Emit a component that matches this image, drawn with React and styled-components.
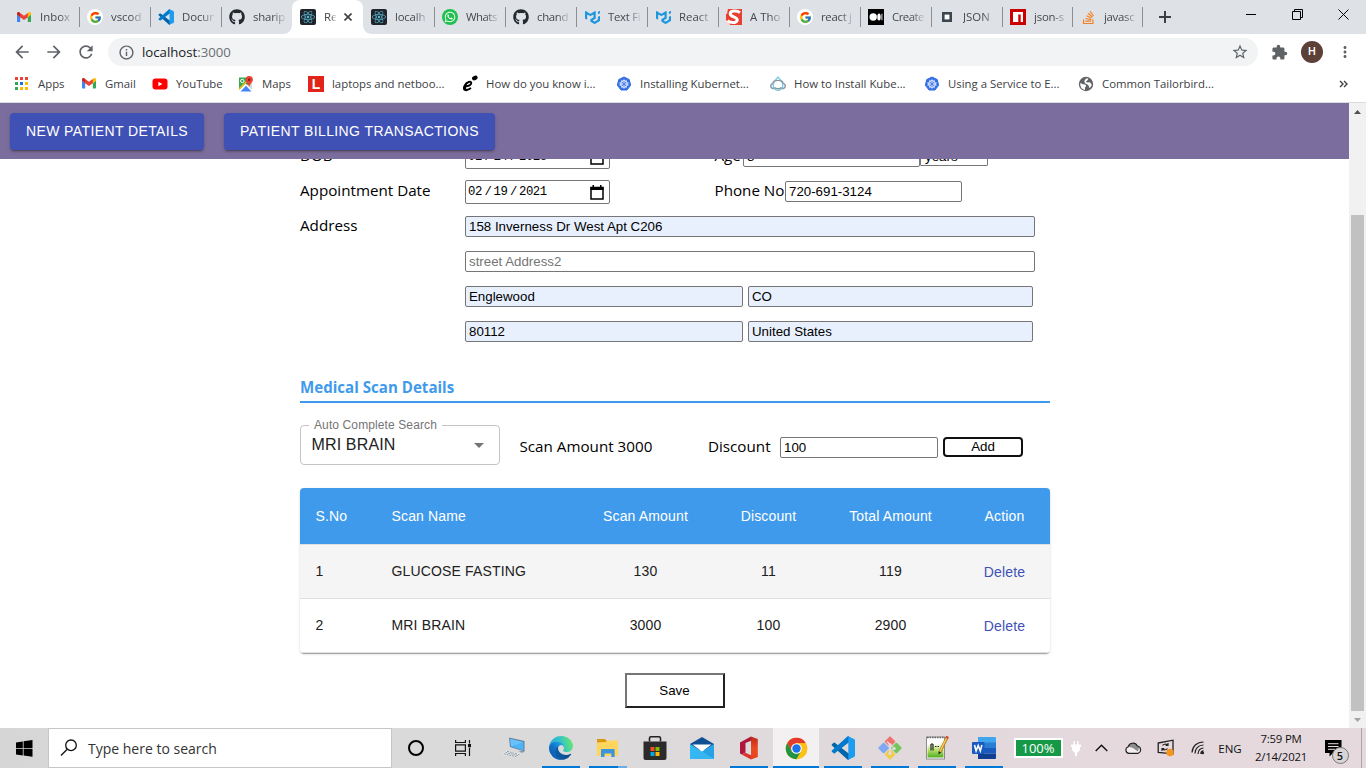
import React from "react";
import styled, { createGlobalStyle, css } from "styled-components";
import { FcGoogle } from "react-icons/fc";
import { FaGithub, FaReact, FaWhatsapp, FaStackOverflow } from "react-icons/fa";
import { SiMui } from "react-icons/si";
import {
  MdArrowBack,
  MdArrowForward,
  MdRefresh,
  MdInfoOutline,
  MdStarBorder,
  MdExtension,
  MdMoreVert,
} from "react-icons/md";

const ui = `"Open Sans", "Noto Sans", sans-serif`;
const arial = `"Liberation Sans", Arial, sans-serif`;

const Global = createGlobalStyle`
  *, *::before, *::after { box-sizing: border-box; }
  body { margin: 0; background: #fff; overflow: hidden; font-family: ${ui}; }
  svg { display: block; flex: none; }
  input, button, select { font-family: ${arial}; margin: 0; }
`;

const Screen = styled.div`
  width: 1366px;
  height: 768px;
  display: flex;
  flex-direction: column;
  overflow: hidden;
`;

/* ---------- icons ---------- */

const GmailIcon = ({ w = 16 }) => (
  <svg width={w} height={w * 0.76} viewBox="0 0 256 193">
    <path fill="#4285F4" d="M58.182 192.05V93.14L27.507 65.077 0 49.504v125.091c0 9.658 7.825 17.455 17.455 17.455h40.727z" />
    <path fill="#34A853" d="M197.818 192.05h40.727c9.659 0 17.455-7.826 17.455-17.455V49.505l-31.156 17.837-27.026 25.798v98.91z" />
    <path fill="#EA4335" d="m58.182 93.14-4.174-38.647 4.174-36.989L128 69.868l69.818-52.364 4.669 34.992-4.669 40.644L128 145.504z" />
    <path fill="#FBBC04" d="M197.818 17.504V93.14L256 49.504V26.231c0-21.585-24.64-33.89-41.89-20.945l-16.292 12.218z" />
    <path fill="#C5221F" d="m0 49.504 26.759 20.07L58.182 93.14V17.504L41.89 5.286C24.61-7.66 0 4.646 0 26.23v23.273z" />
  </svg>
);

const CodeIcon = ({ s = 16 }) => (
  <svg width={s} height={s} viewBox="0 0 24 24">
    <path fill="#0065a9" d="M1 8.2 2.6 6.8a1 1 0 0 1 1.2 0L18 17.8v5.6L17 24 .9 9.4a.8.8 0 0 1 .1-1.2z" />
    <path fill="#007acc" d="M1 15.8l1.6 1.4a1 1 0 0 0 1.2 0L18 6.2V.6L17 0 .9 14.6a.8.8 0 0 0 .1 1.2z" />
    <path fill="#1f9cf0" d="M17.3.3 23 3a1.7 1.7 0 0 1 1 1.5v15a1.7 1.7 0 0 1-1 1.5l-5.7 2.7z" />
  </svg>
);

const PuffS = () => (
  <svg width="16" height="16" viewBox="0 0 16 16">
    <rect width="16" height="16" fill="#e8402f" />
    <path d="M0 0h2L1 5 0 5zM0 11l4 4v1H0z" fill="#f8d5d0" />
    <path d="M14 3.600C10.500.8 3.800 1.600 4.300 5.200c.4 2.800 7 2.600 6.900 5.600-.2 3.200-6 3.700-9.700.8" fill="none" stroke="#fff" strokeWidth="3" />
  </svg>
);

const MediumIcon = () => (
  <svg width="16" height="16" viewBox="0 0 16 16">
    <rect width="16" height="16" fill="#000" />
    <circle cx="5.2" cy="8" r="3.7" fill="#fff" />
    <ellipse cx="11" cy="8" rx="1.7" ry="3.5" fill="#fff" />
    <rect x="13.4" y="4.8" width="1" height="6.4" fill="#ddd" />
  </svg>
);

const SquareIcon = () => (
  <svg width="16" height="16" viewBox="0 0 16 16">
    <rect x="4.3" y="4.3" width="7.4" height="7.4" fill="#fff" stroke="#3c4650" strokeWidth="2.6" />
  </svg>
);

const NpmIcon = () => (
  <svg width="16" height="16" viewBox="0 0 16 16">
    <rect width="16" height="16" fill="#cb0000" />
    <path d="M3 3h10v10h-2.300V5.500H8.300V13H3z" fill="#fff" />
  </svg>
);

const YouTubeIcon = () => (
  <svg width="16" height="16" viewBox="0 0 16 16">
    <rect x=".5" y="2.500" width="15" height="11" rx="3" fill="#f00" />
    <path d="M6.400 5.700v4.600l4-2.300z" fill="#fff" />
  </svg>
);

const MapsIcon = () => (
  <svg width="16" height="16" viewBox="0 0 16 16">
    <path d="M1 1.500h9V9l-9 5z" fill="#34a853" />
    <path d="M1 14 7.500 7.500 14 14v1.500H1z" fill="#fff" />
    <path d="M2.500 15.500 8 9.800l5.500 5.700z" fill="#4285f4" />
    <path d="m9 9 5 5V6z" fill="#d5d8dc" />
    <path d="M1 13 10 4" stroke="#fbbc04" strokeWidth="1.300" />
    <circle cx="4.300" cy="5" r="1.700" fill="none" stroke="#fff" />
    <path d="M11.200 0a3.700 3.700 0 0 1 3.700 3.700c0 2.500-2.800 3.800-3.700 7.300-.9-3.500-3.700-4.800-3.700-7.300A3.700 3.700 0 0 1 11.200 0z" fill="#ea4335" />
    <circle cx="11.200" cy="3.800" r="1.300" fill="#8c1a11" />
  </svg>
);

const GlobeIcon = () => (
  <svg width="16" height="16" viewBox="0 0 16 16">
    <circle cx="8" cy="8" r="7.200" fill="#5f6368" />
    <path d="M2.300 7 5 8.200l2.200.3 1 1.500-1.200 1.500v2.400C4.500 13.600 2.300 11.500 2.300 8.500zM8 2.500h2.500L9.300 4.500 8 5.300l.8 1.200 3-.2 1.900 2c-.2 1.700-1 2.900-2.200 3.900l-.8-2.400L9.500 8.500 7 7.300 6.300 5z" fill="#fff" />
  </svg>
);

const AppsIcon = () => {
  const c = ["#ea4335", "#ea4335", "#ea4335", "#34a853", "#1a73e8", "#fbbc04", "#34a853", "#fbbc04", "#fbbc04"];
  return (
    <svg width="16" height="16" viewBox="0 0 16 16">
      {c.map((fill, i) => (
        <rect key={i} x={1 + (i % 3) * 5} y={1 + Math.floor(i / 3) * 5} width="3" height="3" fill={fill} />
      ))}
    </svg>
  );
};

const LetterL = styled.span`
  width: 16px;
  height: 16px;
  background: #e2231a;
  color: #fff;
  font: 700 14px/16px ${arial};
  text-align: center;
  flex: none;
`;

const EIcon = () => (
  <svg width="16" height="17" viewBox="0 0 16 17">
    <ellipse cx="12.800" cy="3" rx="2.900" ry="2.200" transform="rotate(-20 12.800 3)" />
    <path d="M3 11.200c3.600.2 6.300-1.500 6.300-3.300C9.300 5.800 4.600 6.600 2.700 10.700c-1.600 3.800 1.300 5.800 6.300 2.300" fill="none" stroke="#000" strokeWidth="1.900" />
    <path d="M5.500 7C2 9 .3 13 1.500 15c1 1.500 3.500 1.300 5 .6-2.700-.1-3.200-3.600-1-8.600z" />
  </svg>
);

const KubeIcon = () => (
  <svg width="16" height="16" viewBox="0 0 16 16">
    <path d="M8 1 13.300 3.600 14.600 9.300 11 14H5L1.400 9.300 2.700 3.600z" fill="#326ce5" stroke="#326ce5" strokeLinejoin="round" />
    <circle cx="8" cy="8" r="3.400" fill="none" stroke="#fff" strokeWidth="1" />
    <path d="M8 2.800v10.400M2.900 6.800l10.200 2.400M13.100 6.800 2.900 9.200M5.300 12.200l5.400-8.400M10.700 12.200 5.300 3.800" stroke="#dfe8fb" strokeWidth=".7" />
    <circle cx="8" cy="8" r="1.100" fill="#326ce5" />
  </svg>
);

const CloudHostIcon = () => (
  <svg width="16" height="16" viewBox="0 0 16 16" fill="none">
    <path d="M4 7.500C1.500 7 .7 9 .8 10.300c.2 1.700 1.700 2.200 3.200 2.200M12 7.500c2.500-.5 3.300 1.500 3.200 2.800-.2 1.700-1.700 2.200-3.200 2.200" stroke="#8b979d" strokeWidth="1.400" />
    <path d="M8 1c1.500 2 4.800 4.700 4.800 8.500a4.800 4.800 0 0 1-9.600 0C3.200 5.700 6.500 3 8 1z" stroke="#6cc5e6" strokeWidth="1.200" />
    <path d="M3 7c.5-3.500 9.500-3.500 10 0M4.500 11.500c1.500 1.600 5.500 1.600 7 0" stroke="#8b979d" strokeWidth="1.400" />
  </svg>
);

const WinLogo = () => (
  <svg width="17" height="17" viewBox="0 0 17 17">
    <path d="M0 2.400 6.800 1.400V8H0zM7.600 1.300 16.500 0v8H7.600zM0 8.800h6.800v6.700L0 14.500zM7.600 8.800h8.900v8L7.600 15.600z" />
  </svg>
);

const SearchGlyph = () => (
  <svg width="18" height="18" viewBox="0 0 18 18" fill="none" stroke="#111" strokeWidth="1.300">
    <circle cx="11" cy="6.300" r="5.300" />
    <path d="M7.200 10.200 1 16.500" />
  </svg>
);

const TaskView = () => (
  <svg width="16" height="16" viewBox="0 0 16 16" fill="none" stroke="#111" strokeWidth="1.200">
    <path d="M.6 0v2.500h9.800V0M.6 16v-2.500h9.800V16M.6 4.800h9.800v6.400H.6zM14.500 0v3.500M14.500 7.800V16" />
    <path d="M13 4h3v3.200h-3z" fill="#111" stroke="none" />
  </svg>
);

const LaptopIcon = () => (
  <svg width="24" height="22" viewBox="0 0 24 22">
    <path d="M7 .5 22.500 4v10.500L8 10z" fill="#5b7f9c" />
    <path d="M8 1.700 21.500 4.900v8.500L9 9.500z" fill="#4fb4f5" />
    <path d="M9 9.500 8 1.700 21.500 4.900z" fill="#7cc9fa" opacity=".6" />
    <path d="M21.500 13.500 22.500 15l-3 .8-3-1.300z" fill="#8c98a3" />
    <path d="M5.500 13.500 19 17l-5 3.500L0 17z" fill="#eceff2" />
    <path d="M5 14.200 17.500 17.700M3.500 15.400l12.500 3.300M1.800 16.700l12.700 3.100" stroke="#8f989f" strokeWidth="1" strokeDasharray="2 .8" />
  </svg>
);

const EdgeIcon = () => (
  <svg width="24" height="24" viewBox="0 0 256 256">
    <defs>
      <linearGradient id="eg1" x1="0.250" y1="0.700" x2="0.950" y2="0.700"><stop offset="0" stopColor="#0c59a4" /><stop offset="1" stopColor="#114a8b" /></linearGradient>
      <linearGradient id="eg2" x1="0.900" y1="0.300" x2="0.300" y2="0.950"><stop offset="0" stopColor="#1b9de2" /><stop offset=".5" stopColor="#1173c6" /><stop offset="1" stopColor="#0b5bb0" /></linearGradient>
      <linearGradient id="eg3" x1="0" y1="0.600" x2="1" y2="0.400"><stop offset="0" stopColor="#2aa5dd" /><stop offset=".5" stopColor="#35c1c8" /><stop offset="1" stopColor="#66eb6e" /></linearGradient>
    </defs>
    <path fill="url(#eg1)" d="M231 190.500c-3.400 1.800-6.900 3.400-10.500 4.700a101 101 0 0 1-35.900 6.500c-47.300 0-88.500-32.500-88.500-74.300a31.500 31.500 0 0 1 16.400-27.300c-42.800 1.800-53.800 46.400-53.800 72.500 0 73.900 68.100 81.400 82.800 81.400 7.900 0 19.800-2.300 27-4.600l1.300-.4a128.300 128.300 0 0 0 66.600-52.800 4 4 0 0 0-5.400-5.700z" />
    <path fill="url(#eg2)" d="M105.700 241.400a79.200 79.200 0 0 1-22.700-21.300 80.700 80.700 0 0 1 29.500-120c3.200-1.500 8.500-4.100 15.600-4a32.400 32.400 0 0 1 25.700 13 31.900 31.900 0 0 1 6.300 18.700c0-.2 24.500-79.600-80-79.600C36.100 48.200 0 89.900 0 126.500A130 130 0 0 0 12.100 182a128 128 0 0 0 156.400 67 75.500 75.500 0 0 1-62.800-7.600z" />
    <path fill="url(#eg3)" d="M152.300 148.900c-.9 1-3.400 2.500-3.400 5.600 0 2.600 1.700 5.200 4.800 7.300 14.400 10.100 41.700 8.700 41.700 8.700a59.600 59.600 0 0 0 30.300-8.300 61.400 61.400 0 0 0 30.400-52.900c.3-22.400-8-37.300-11.300-43.900C223.500 23.900 177.700 0 128 0A128 128 0 0 0 0 126.200c.5-36.500 36.800-66 80-66 3.500 0 23.500.3 42 10.100 16.300 8.600 24.900 18.900 30.800 29.200 6.200 10.700 7.300 24.100 7.300 29.500s-2.700 13.300-7.800 19.900z" />
  </svg>
);

const FolderIcon = () => (
  <svg width="22" height="18" viewBox="0 0 22 18">
    <path d="M0 0h8l2 2.500V6H0z" fill="#d99a10" />
    <path d="M0 3.500 9 3l1.500-1.500H21V17H0z" fill="#ffd55e" />
    <path d="M4 18v-7.200A.8.800 0 0 1 4.800 10h12a.8.800 0 0 1 .8.800V18h-3.300v-3.500H7.500V18z" fill="#3b94dc" />
  </svg>
);

const StoreIcon = () => (
  <svg width="24" height="24" viewBox="0 0 24 24">
    <path d="M6.500 5.500V2.300a1.500 1.500 0 0 1 1.500-1.500h8a1.500 1.500 0 0 1 1.500 1.500v3.200" fill="none" stroke="#222" strokeWidth="1.600" />
    <path d="M.5 5.500h23V22a2 2 0 0 1-2 2h-19a2 2 0 0 1-2-2z" fill="#2b2b2b" />
    <path d="M7.500 11h4v4h-4z" fill="#f25022" />
    <path d="M12.500 11h4v4h-4z" fill="#7fba00" />
    <path d="M7.500 16h4v4h-4z" fill="#00a4ef" />
    <path d="M12.500 16h4v4h-4z" fill="#ffb900" />
  </svg>
);

const MailIcon = () => (
  <svg width="24" height="22" viewBox="0 0 24 22">
    <path d="M0 7 12 0l12 7v6H0z" fill="#0f4f94" />
    <path d="M0 7 12 14.500 24 7v15H0z" fill="#35b8f1" />
    <path d="M12 14.500 24 7v15z" fill="#1c8fdc" opacity=".55" />
    <path d="M2.500 7.500h19L12 14.500z" fill="#fff" />
    <path d="M12 14.500 24 22H0z" fill="#38b4f0" opacity=".7" />
  </svg>
);

const OfficeIcon = () => (
  <svg width="20" height="24" viewBox="0 0 20 24">
    <defs><linearGradient id="of" x1="0" y1="0" x2="0" y2="1"><stop offset="0" stopColor="#c0281a" /><stop offset=".5" stopColor="#ea4a20" /><stop offset="1" stopColor="#e8401c" /></linearGradient></defs>
    <path d="M1 6.500 12 .5v4.300L6.500 7v9.500L2.800 18.500 1 17.500z" fill="#b0173c" />
    <path d="M12 .5 18.800 3v18L12 23.500z" fill="url(#of)" />
    <path d="M2.800 18.500 6.500 16.800 12 19.300v4.200z" fill="#d9342f" />
  </svg>
);

const ChromeIcon = () => (
  <svg width="23" height="23" viewBox="0 0 48 48">
    <circle cx="24" cy="24" r="22.500" fill="#fbc116" />
    <path d="M4.500 12.800a22.500 22.500 0 0 1 39 0H24L14.300 29.600z" fill="#e33b2e" />
    <path d="M4.500 12.800 14.300 29.600 24 35.200l9.700-5.600L24 46.500A22.500 22.500 0 0 1 4.500 12.800z" fill="#229342" />
    <path d="M24 46.500 33.700 29.600 33.700 18.400 24 12.800h19.500A22.500 22.500 0 0 1 24 46.500z" fill="#fbc116" />
    <circle cx="24" cy="24" r="11.200" fill="#fff" />
    <circle cx="24" cy="24" r="8.800" fill="#1a73e8" />
  </svg>
);

const GitIcon = () => (
  <svg width="24" height="24" viewBox="0 0 24 24">
    <g transform="rotate(45 12 12)">
      <rect x="3.500" y="3.500" width="8" height="8" rx="1" fill="#f1716f" />
      <rect x="12.500" y="3.500" width="8" height="8" rx="1" fill="#74c55b" />
      <rect x="3.500" y="12.500" width="8" height="8" rx="1" fill="#7fa9f2" />
      <rect x="12.500" y="12.500" width="8" height="8" rx="1" fill="#f2cb49" />
    </g>
    <path d="M9 5.500 14.500 11M12 9v9" stroke="#e3dbdd" strokeWidth="1.500" />
    <circle cx="12" cy="9" r="1.700" fill="#e3dbdd" />
    <circle cx="16" cy="12.500" r="1.700" fill="#e3dbdd" />
    <circle cx="12" cy="17.500" r="1.700" fill="#e3dbdd" />
  </svg>
);

const NotepadIcon = () => (
  <svg width="24" height="24" viewBox="0 0 24 24">
    <defs><linearGradient id="np" x1="0" y1="0" x2="0" y2="1"><stop offset=".25" stopColor="#fff" /><stop offset=".6" stopColor="#b5e06a" /><stop offset="1" stopColor="#4fae20" /></linearGradient></defs>
    <rect x="1.500" y="1" width="18" height="22" fill="#fff" stroke="#8c8c8c" />
    <rect x="2.500" y="3" width="16" height="18.500" fill="url(#np)" />
    <path d="M2 1.500h17" stroke="#666" strokeWidth="1.500" strokeDasharray="1.500 1" />
    <path d="M6 8v6.500M8 8v6.500M6 8h2M10 10.500h1.500M12.500 10.500H14" stroke="#222" strokeWidth="1.200" fill="none" />
    <path d="M22 1.500 15 16" stroke="#b9812b" strokeWidth="3" />
    <path d="M21.700 1.800 14.900 15.700" stroke="#f5cf57" strokeWidth="1.400" />
    <path d="M22.600.3l-1 2.100" stroke="#d04a3a" strokeWidth="3" />
    <path d="m13.600 15.200 2.700 1.300-2.900 2z" fill="#222" />
  </svg>
);

const WordIcon = () => (
  <svg width="24" height="22" viewBox="0 0 24 22">
    <path d="M6 0h17a1 1 0 0 1 1 1v5H6z" fill="#41a5ee" />
    <path d="M6 5.500h18V11H6z" fill="#2b7cd3" />
    <path d="M6 11h18v5.500H6z" fill="#185abd" />
    <path d="M6 16.500h18V21a1 1 0 0 1-1 1H6z" fill="#103f91" />
    <rect x="0" y="5" width="12.500" height="12" rx="1" fill="#185abd" />
    <path d="m2.500 8 1.600 6 2.100-5.500 2.100 5.500L9.900 8" fill="none" stroke="#fff" strokeWidth="1.600" />
  </svg>
);

const PlugIcon = () => (
  <svg width="10" height="15" viewBox="0 0 10 15" fill="#fff">
    <path d="M2.500 0h1.400v3.500h2.200V0h1.400v3.500H10V6H9v3l-2.500 2.500H6V15H4v-3.500h-.5L1 9V6H0V3.500h2.500z" />
  </svg>
);

const CaretIcon = () => (
  <svg width="13" height="8" viewBox="0 0 13 8" fill="none" stroke="#111" strokeWidth="1.400">
    <path d="m.7 7 5.800-5.800L12.300 7" />
  </svg>
);

const OneDriveIcon = () => (
  <svg width="17" height="12" viewBox="0 0 17 12">
    <path d="M4 11.300a3.400 3.400 0 0 1-.8-6.600A4.900 4.900 0 0 1 12.300 4a3.800 3.800 0 0 1 .9 7.300z" fill="#f4eef0" />
    <path d="M3.300 4.700A4.900 4.900 0 0 1 12.300 4l2 .7L13 9.500 7.500 5.800z" fill="#8d8d8d" />
    <path d="M4 11.300a3.400 3.400 0 0 1-.8-6.600A4.900 4.900 0 0 1 12.300 4a3.800 3.800 0 0 1 .9 7.300z" fill="none" stroke="#222" strokeWidth="1.200" />
  </svg>
);

const SyncIcon = () => (
  <svg width="18" height="18" viewBox="0 0 18 18" fill="none">
    <path d="M1.200 4 16 1.200v13.600L1.200 13.500z" stroke="#222" strokeWidth="1.300" />
    <path d="M5.500 6.500c1-1.500 3.500-1.700 5-.5M11 4v2.300H8.700M10.500 9.500c-1 1.500-3.500 1.700-5 .5M5 12V9.700h2.300" stroke="#222" strokeWidth="1.200" />
    <circle cx="13" cy="13.500" r="3.700" fill="#f7941d" />
  </svg>
);

const WifiIcon = () => (
  <svg width="14" height="14" viewBox="0 0 14 14" fill="none" stroke="#222" strokeWidth="1.200">
    <path d="M1 11.500C1.500 5 6 1 12.500 1M4 12.500C4 7.500 7.500 4 12.500 4M7 13c0-3.500 2.500-6 5.500-6" />
    <path d="M10 13c0-2 1-3 2.500-3" strokeWidth="1.500" />
    <circle cx="11.800" cy="12" r="1.300" fill="#222" stroke="none" />
  </svg>
);

const NoteIcon = () => (
  <svg width="17" height="17" viewBox="0 0 17 17">
    <path d="M0 0h16.500v13H8l-3.500 3.500V13H0z" fill="#000" />
    <path d="M3 3.700h10.500M3 6.500h10.500M3 9.300h7" stroke="#e5d9de" strokeWidth="1" />
  </svg>
);

/* ---------- browser chrome ---------- */

const TabStrip = styled.div`
  height: 34px;
  flex: none;
  background: #dee1e6;
  display: flex;
  padding-left: 8px;
`;

const divider = css`
  background: linear-gradient(#8a8d91, #8a8d91) left 7px / 1px 20px no-repeat;
  background-position: left 7px;
`;

const Tab = styled.div`
  position: relative;
  width: ${(p) => p.$w || 71}px;
  height: 34px;
  display: flex;
  align-items: center;
  gap: 8px;
  padding-left: 8px;
  ${(p) =>
    p.$active
      ? css`
          background: #fff;
          border-radius: 8px 8px 0 0;
          &::before,
          &::after {
            content: "";
            position: absolute;
            bottom: 0;
            width: 8px;
            height: 8px;
            left: -8px;
            background: radial-gradient(circle at 0 0, transparent 7.5px, #fff 8px);
          }
          &::after {
            left: 100%;
            background: radial-gradient(circle at 100% 0, transparent 7.5px, #fff 8px);
          }
        `
      : !p.$plain && divider}
`;

const Favicon = styled.span`
  width: 16px;
  height: 16px;
  display: flex;
  align-items: center;
  justify-content: center;
  flex: none;
  background: ${(p) => p.$bg || "transparent"};
  border-radius: ${(p) => p.$r || 0}px;
  color: ${(p) => p.$c || "inherit"};
`;

const TabLabel = styled.span`
  width: ${(p) => p.$w || 32}px;
  overflow: hidden;
  white-space: nowrap;
  font-size: 11.4px;
  line-height: 16px;
  letter-spacing: ${(p) => p.$ls || 0}px;
  color: #45494d;
  mask-image: linear-gradient(90deg, #000 60%, rgba(0, 0, 0, 0.15) 100%);
`;

const NewTab = styled.span`
  display: flex;
  align-items: center;
  height: 34px;
  padding-left: 17px;
  ${divider}
`;

const WindowControls = styled.div`
  margin-left: auto;
  display: flex;
  height: 29px;
  span {
    width: 46px;
    display: flex;
    align-items: center;
    justify-content: center;
  }
`;

const Toolbar = styled.div`
  height: 36px;
  flex: none;
  display: flex;
  align-items: center;
  padding: 0 12px 0 12px;
  color: #5f6368;
`;

const NavIcons = styled.div`
  display: flex;
  gap: 12px;
  width: 96px;
  flex: none;
`;

const Omnibox = styled.div`
  width: 1150px;
  flex: none;
  height: 28px;
  border-radius: 14px;
  background: #f1f3f4;
  display: flex;
  align-items: center;
  padding: 0 9px 0 10px;
`;

const Url = styled.span`
  margin-left: 7px;
  flex: 1;
  font-size: 13.2px;
  color: #202124;
  i { font-style: normal; color: #6b6f74; }
`;

const ToolbarActions = styled.div`
  display: flex;
  align-items: center;
  padding-left: 13px;
`;

const Avatar = styled.span`
  width: 22px;
  height: 22px;
  border-radius: 50%;
  background: #5d4037;
  color: #fff;
  font: 500 11px/22px Roboto, sans-serif;
  text-align: center;
  margin: 0 13px 0 13px;
`;

const Bookmarks = styled.div`
  height: 33px;
  flex: none;
  display: flex;
  align-items: center;
  padding: 0 0 5px 14px;
  border-bottom: 1px solid #dadce0;
  color: #3c4043;
`;

const Bookmark = styled.div`
  width: ${(p) => p.$w}px;
  flex: none;
  display: flex;
  align-items: center;
  gap: 8px;
  font-size: 11.37px;
  line-height: 16px;
  white-space: nowrap;
`;

const More = styled.span`
  margin-left: auto;
  padding-right: 18px;
`;

/* ---------- page ---------- */

const Viewport = styled.div`
  height: 625px;
  flex: none;
  display: flex;
`;

const Page = styled.div`
  width: 1349px;
  display: flex;
  flex-direction: column;
  overflow: hidden;
`;

const AppBar = styled.header`
  height: 56px;
  flex: none;
  background: #7b6d9d;
  display: flex;
  gap: 20px;
  padding: 10px;
`;

const NavButton = styled.button`
  width: ${(p) => p.$w}px;
  height: 37px;
  padding: 0 0 2px;
  border: 0;
  border-radius: 4px;
  background: #3f51b5;
  color: #fff;
  font-size: 14px;
  letter-spacing: 0.4px;
  white-space: nowrap;
  box-shadow: 0 3px 1px -2px rgba(0, 0, 0, 0.2), 0 2px 2px rgba(0, 0, 0, 0.14), 0 1px 5px rgba(0, 0, 0, 0.12);
`;

const Scroller = styled.div`
  flex: 1;
  min-height: 0;
  overflow: hidden;
`;

const Content = styled.main`
  width: 750px;
  margin: -20px 0 0 300px;
`;

const Row = styled.div`
  height: 35px;
  display: flex;
  align-items: center;
`;

const Label = styled.label`
  width: ${(p) => (p.$w ? p.$w + "px" : "auto")};
  flex: none;
  font-size: 15.2px;
  line-height: 20px;
  padding-bottom: 3px;
  color: #000;
  white-space: nowrap;
`;

const Input = styled.input`
  width: ${(p) => p.$w}px;
  height: 21px;
  border: 1px solid #767676;
  border-radius: 2px;
  padding: 0 2px 0 3px;
  font-size: 13.3px;
  color: #000;
  background: ${(p) => (p.$filled ? "#e8f0fe" : "#fff")};
  margin-right: ${(p) => p.$mr || 0}px;
  &::placeholder { color: #757575; }
`;

const DateBox = styled.div`
  width: 145px;
  height: 24px;
  margin: 1px 104.5px 0 0;
  border: 1px solid #767676;
  border-radius: 2px;
  display: flex;
  align-items: center;
  padding: 0 5px 0 2px;
  font: 12.3px "Liberation Mono", monospace;
  letter-spacing: -0.4px;
  span { margin: 0 2px 0 2.5px; }
  svg { margin-left: auto; }
`;

const Select = styled.div`
  width: 68px;
  height: 19px;
  border: 1px solid #767676;
  border-radius: 1px;
  display: flex;
  align-items: center;
  justify-content: space-between;
  padding: 0 5px 0 4px;
  font: 13.333px ${arial};
`;

const SectionTitle = styled.h3`
  margin: 0;
  height: 54px;
  padding-top: 28px;
  font-size: 15.1px;
  line-height: 20px;
  font-weight: 700;
  color: #3f9aec;
  border-bottom: 2px solid #3f9aec;
`;

const ScanRow = styled.div`
  height: 85px;
  padding-top: 22px;
  display: flex;
  align-items: flex-start;
`;

const Combo = styled.fieldset`
  width: 200px;
  height: 46px;
  margin: -6px 19.5px 0 0;
  min-width: 0;
  border: 1px solid #c4c4c4;
  border-radius: 4px;
  padding: 0 15px 0 10.5px;
  font-family: ${arial};
  legend {
    padding: 0 5px;
    margin-left: -2.5px;
    font-size: 12px;
    line-height: 12px;
    letter-spacing: 0.11px;
    color: #757575;
  }
  div {
    display: flex;
    align-items: center;
    justify-content: space-between;
    font-size: 16px;
    line-height: 18px;
    letter-spacing: 0.15px;
    padding-top: 5px;
    color: #212121;
  }
`;

const Fields = styled.div`
  display: flex;
  align-items: center;
  height: 21px;
  margin-top: 12px;
`;

const AddButton = styled.button`
  width: 80px;
  height: 20px;
  margin-bottom: 1px;
  padding: 0;
  border: 2px solid #101010;
  border-radius: 4px;
  background: #fff;
  color: #000;
  font-size: 13.333px;
  line-height: 16px;
`;

const Table = styled.div`
  border-radius: 4px;
  overflow: hidden;
  background: #fff;
  box-shadow: 0 2px 1px -1px rgba(0, 0, 0, 0.2), 0 1px 1px rgba(0, 0, 0, 0.14), 0 1px 3px rgba(0, 0, 0, 0.12);
  font-family: ${arial};
  font-size: 14px;
  letter-spacing: 0.15px;
  color: #212121;
`;

const TableRow = styled.div`
  display: grid;
  grid-template-columns: 76px 208px 123px 123px 121px 99px;
  align-items: center;
  height: ${(p) => (p.$head ? 57 : 54)}px;
  padding-bottom: ${(p) => (p.$head ? 0 : 2)}px;
  background: ${(p) => (p.$head ? "#3f9aec" : p.$alt ? "#f5f5f5" : "#fff")};
  color: ${(p) => (p.$head ? "#fff" : "inherit")};
  border-bottom: 1px solid #e0e0e0;
`;

const Cell = styled.div`
  text-align: ${(p) => (p.$center ? "center" : "left")};
  padding-left: ${(p) => (p.$center ? 0 : 15.5)}px;
`;

const ActionCell = styled(Cell)`
  text-align: center;
  padding: ${(p) => (p.$link ? "2px" : "0")} 0 0 8px;
  color: ${(p) => (p.$link ? "#3f51b5" : "inherit")};
`;

const SaveButton = styled.button`
  display: block;
  width: 100px;
  height: 35px;
  margin: 20px 0 0 325px;
  background: #fff;
  border: 2px solid;
  border-color: #767676 #212121 #212121 #767676;
  color: #000;
  font-size: 13.333px;
  padding: 0 1px 0 0;
`;

const Scrollbar = styled.div`
  width: 17px;
  background: #f1f1f1;
  display: flex;
  flex-direction: column;
  align-items: center;
  justify-content: space-between;
  span { height: 17px; display: flex; align-items: center; }
`;

const Thumb = styled.div`
  width: 13px;
  height: 496px;
  margin-top: 95px;
  background: #c1c1c1;
`;

/* ---------- taskbar ---------- */

const Taskbar = styled.footer`
  height: 40px;
  flex: none;
  display: flex;
  align-items: stretch;
  background: linear-gradient(90deg, #d6d6d6 0, #dadada 30%, #dcdadb 45%, #e1d9db 65%, #e5d9de 80%);
`;

const Start = styled.div`
  width: 48px;
  display: flex;
  align-items: center;
  justify-content: center;
`;

const SearchBox = styled.div`
  width: 344px;
  border: 1px solid #c6c6c6;
  background: #fff;
  display: flex;
  align-items: center;
  gap: 10px;
  padding-left: 11px;
  margin-right: 0.5px;
  font-size: 14px;
  color: #333;
`;

const Slot = styled.div`
  width: 47px;
  flex: none;
  display: flex;
  align-items: center;
  justify-content: center;
  margin-left: ${(p) => p.$ml || 0}px;
  background:
    ${(p) =>
      p.$split
        ? "linear-gradient(90deg, #0078d7 76%, #6aace6 76%) center bottom / 38px 2px no-repeat"
        : p.$open
        ? "linear-gradient(#0078d7, #0078d7) center bottom / " + (p.$active ? "46px" : "38px") + " 2px no-repeat"
        : "none"},
    ${(p) => (p.$active ? "linear-gradient(#f3f0f1, #f3f0f1) center / 46px 100% no-repeat" : "none")};
`;

const Ring = styled.span`
  width: 16px;
  height: 16px;
  border: 2.5px solid #000;
  border-radius: 50%;
`;

const Tray = styled.div`
  flex: 1;
  display: flex;
  align-items: center;
  padding-left: 6px;
  color: #111;
`;

const Battery = styled.span`
  width: 49px;
  height: 20px;
  margin-right: 8px;
  border: 2px solid #fff;
  background: #159947;
  color: #fff;
  font-size: 13px;
  line-height: 16px;
  text-align: center;
`;

const TrayItem = styled.span`
  width: ${(p) => p.$w}px;
  flex: none;
  display: flex;
  justify-content: center;
  font-size: 11.5px;
`;

const Clock = styled.span`
  width: 63px;
  text-align: center;
  font-size: 11.4px;
  line-height: 18px;
  letter-spacing: -0.2px;
  white-space: nowrap;
  padding-bottom: 1px;
`;

const Notifications = styled.span`
  position: relative;
  margin-left: 12px;
`;

const Badge = styled.span`
  position: absolute;
  left: 7px;
  top: 7px;
  width: 17px;
  height: 17px;
  border-radius: 50%;
  border: 1px solid #777;
  background: #d8d4d6;
  font: 600 11px/15px ${ui};
  text-align: center;
`;

const ShowDesktop = styled.span`
  margin-left: auto;
  width: 5px;
  height: 40px;
  border-left: 1px solid #aba4a8;
`;

const G = () => <Favicon $bg="#fff" $r={8}><FcGoogle size={13} /></Favicon>;
const ReactFav = () => <Favicon $bg="#20232a" $r={2} $c="#58b9d3"><FaReact size={14} /></Favicon>;
const Mui = () => <Favicon $c="#1c96e0"><SiMui size={15} /></Favicon>;
const Git = () => <Favicon $c="#24292e"><FaGithub size={16} /></Favicon>;

const tabs = [
  ["Inbox", <Favicon key="i"><GmailIcon w={14} /></Favicon>, { plain: true }],
  ["vscod", <G key="i" />],
  ["Docum", <CodeIcon key="i" />, { ls: -0.1 }],
  ["sharip", <Git key="i" />, { ls: -0.2 }],
  ["Re", <ReactFav key="i" />, { active: true }],
  ["localh", <ReactFav key="i" />, { plain: true, ls: -0.2 }],
  ["Whats", <Favicon key="i" $bg="#1fc04f" $r={8} $c="#fff"><FaWhatsapp size={12} /></Favicon>, { ls: -0.5 }],
  ["chand", <Git key="i" />, { ls: -0.3 }],
  ["Text Fi", <Mui key="i" />, { ls: -0.3 }],
  ["React", <Mui key="i" />],
  ["A Tho", <PuffS key="i" />],
  ["react j", <G key="i" />, { ls: -0.3 }],
  ["Create", <MediumIcon key="i" />, { ls: -0.5 }],
  ["JSON", <SquareIcon key="i" />],
  ["json-s", <NpmIcon key="i" />, { w: 70, ls: -0.2 }],
  ["javasc", <Favicon key="i" $c="#f48024"><FaStackOverflow size={15} /></Favicon>, { w: 70, ls: -0.3 }],
];

const bookmarks = [
  ["Apps", <AppsIcon key="i" />, 67],
  ["Gmail", <Favicon key="i"><GmailIcon w={14} /></Favicon>, 71],
  ["YouTube", <YouTubeIcon key="i" />, 86],
  ["Maps", <MapsIcon key="i" />, 70],
  ["laptops and netboo...", <LetterL key="i">L</LetterL>, 154],
  ["How do you know i...", <EIcon key="i" />, 154],
  ["Installing Kubernet...", <KubeIcon key="i" />, 154],
  ["How to Install Kube...", <CloudHostIcon key="i" />, 154],
  ["Using a Service to E...", <KubeIcon key="i" />, 154],
  ["Common Tailorbird...", <GlobeIcon key="i" />, 150],
];

const DateField = ({ m, d, y }) => (
  <DateBox>
    {m}<span>/</span>{d}<span>/</span>{y}
    <svg width="14" height="15" viewBox="0 0 14 15">
      <path d="M1 2.500h12v11.500H1z" fill="none" stroke="#000" strokeWidth="1.500" />
      <path d="M.5 2h13v3H.5zM2.500 0H4v2H2.500zM10 0h1.500v2H10z" />
    </svg>
  </DateBox>
);

const scans = [
  ["1", "GLUCOSE FASTING", "130", "11", "119"],
  ["2", "MRI BRAIN", "3000", "100", "2900"],
];

export default function App() {
  return (
    <Screen>
      <Global />
      <TabStrip>
        {tabs.map(([label, icon, o = {}], i) => (
          <Tab key={i} $active={o.active} $plain={o.plain} $w={o.w}>
            {icon}
            <TabLabel $w={o.active ? 12 : 32} $ls={o.ls}>{label}</TabLabel>
            {o.active && (
              <svg width="8" height="8" viewBox="0 0 8 8" stroke="#3c4043" strokeWidth="1.600"><path d="m.5.5 7 7m0-7-7 7" /></svg>
            )}
          </Tab>
        ))}
        <NewTab>
          <svg width="12" height="12" viewBox="0 0 12 12" stroke="#3c4043" strokeWidth="2"><path d="M6 0v12M0 6h12" /></svg>
        </NewTab>
        <WindowControls>
          <span><svg width="10" height="2" viewBox="0 0 10 2"><path d="M0 0h10v1H0z" /></svg></span>
          <span>
            <svg width="11" height="11" viewBox="0 0 11 11" fill="none" stroke="#000"><path d="M.5 2.500h8v8h-8zM2.500 2.500v-2h8v8h-2" /></svg>
          </span>
          <span><svg width="11" height="11" viewBox="0 0 11 11" stroke="#000"><path d="m.5.5 10 10m0-10-10 10" /></svg></span>
        </WindowControls>
      </TabStrip>
      <Toolbar>
        <NavIcons>
          <MdArrowBack size={20} />
          <MdArrowForward size={20} />
          <MdRefresh size={20} />
        </NavIcons>
        <Omnibox>
          <MdInfoOutline size={17} />
          <Url>localhost<i>:3000</i></Url>
          <MdStarBorder size={18} />
        </Omnibox>
        <ToolbarActions>
          <MdExtension size={17} />
          <Avatar>H</Avatar>
          <MdMoreVert size={18} />
        </ToolbarActions>
      </Toolbar>
      <Bookmarks>
        {bookmarks.map(([label, icon, w]) => (
          <Bookmark key={label} $w={w}>{icon}{label}</Bookmark>
        ))}
        <More>
          <svg width="9" height="8" viewBox="0 0 9 8" fill="none" stroke="#3c4043" strokeWidth="1.400"><path d="m1 1 3 3-3 3M5 1l3 3-3 3" /></svg>
        </More>
      </Bookmarks>

      <Viewport>
        <Page>
          <AppBar>
            <NavButton $w={194}>NEW PATIENT DETAILS</NavButton>
            <NavButton $w={271}>PATIENT BILLING TRANSACTIONS</NavButton>
          </AppBar>
          <Scroller>
            <Content>
              <Row>
                <Label $w={165}>DOB</Label>
                <DateField m="02" d="14" y="2018" />
                <Label $w={28.5}>Age</Label>
                <Input $w={177} defaultValue="3" />
                <Select>
                  years
                  <svg width="8" height="5" viewBox="0 0 8 5" fill="none" stroke="#222" strokeWidth="1.300"><path d="m.5.5 3.500 3.500L7.500.5" /></svg>
                </Select>
              </Row>
              <Row>
                <Label $w={165}>Appointment Date</Label>
                <DateField m="02" d="19" y="2021" />
                <Label $w={70.5}>Phone No</Label>
                <Input $w={177} defaultValue="720-691-3124" />
              </Row>
              <Row>
                <Label $w={165}>Address</Label>
                <Input $w={570} $filled defaultValue="158 Inverness Dr West Apt C206" />
              </Row>
              <Row>
                <Label $w={165} />
                <Input $w={570} placeholder="street Address2" />
              </Row>
              <Row>
                <Label $w={165} />
                <Input $w={278} $mr={5} $filled defaultValue="Englewood" />
                <Input $w={285} $filled defaultValue="CO" />
              </Row>
              <Row>
                <Label $w={165} />
                <Input $w={278} $mr={5} $filled defaultValue="80112" />
                <Input $w={285} $filled defaultValue="United States" />
              </Row>
              <SectionTitle>Medical Scan Details</SectionTitle>
              <ScanRow>
                <Combo>
                  <legend>Auto Complete Search</legend>
                  <div>
                    MRI BRAIN
                    <svg width="10" height="5" viewBox="0 0 10 5" fill="#757575"><path d="M0 0h10L5 5z" /></svg>
                  </div>
                </Combo>
                <Fields>
                  <Label $w={188.5}>Scan Amount 3000</Label>
                  <Label $w={72}>Discount</Label>
                  <Input $w={158} $mr={5} defaultValue="100" />
                  <AddButton>Add</AddButton>
                </Fields>
              </ScanRow>
              <Table>
                <TableRow $head>
                  <Cell>S.No</Cell>
                  <Cell>Scan Name</Cell>
                  <Cell $center>Scan Amount</Cell>
                  <Cell $center>Discount</Cell>
                  <Cell $center>Total Amount</Cell>
                  <ActionCell>Action</ActionCell>
                </TableRow>
                {scans.map(([no, name, amount, discount, total], i) => (
                  <TableRow key={no} $alt={i === 0}>
                    <Cell>{no}</Cell>
                    <Cell>{name}</Cell>
                    <Cell $center>{amount}</Cell>
                    <Cell $center>{discount}</Cell>
                    <Cell $center>{total}</Cell>
                    <ActionCell $link>Delete</ActionCell>
                  </TableRow>
                ))}
              </Table>
              <SaveButton>Save</SaveButton>
            </Content>
          </Scroller>
        </Page>
        <Scrollbar>
          <span><svg width="7" height="4" viewBox="0 0 7 4"><path d="M0 4h7L3.500 0z" fill="#505050" /></svg></span>
          <Thumb />
          <span><svg width="7" height="4" viewBox="0 0 7 4"><path d="M0 0h7L3.500 4z" fill="#a3a3a3" /></svg></span>
        </Scrollbar>
      </Viewport>

      <Taskbar>
        <Start><WinLogo /></Start>
        <SearchBox><SearchGlyph />Type here to search</SearchBox>
        <Slot><Ring /></Slot>
        <Slot><TaskView /></Slot>
        <Slot $ml={4}><LaptopIcon /></Slot>
        <Slot $open><EdgeIcon /></Slot>
        <Slot $split><FolderIcon /></Slot>
        <Slot><StoreIcon /></Slot>
        <Slot><MailIcon /></Slot>
        <Slot $open><OfficeIcon /></Slot>
        <Slot $open $active><ChromeIcon /></Slot>
        <Slot $open><CodeIcon s={24} /></Slot>
        <Slot $open><GitIcon /></Slot>
        <Slot $open><NotepadIcon /></Slot>
        <Slot $open><WordIcon /></Slot>
        <Tray>
          <Battery>100%</Battery>
          <TrayItem $w={10}><PlugIcon /></TrayItem>
          <TrayItem $w={41}><CaretIcon /></TrayItem>
          <TrayItem $w={24}><OneDriveIcon /></TrayItem>
          <TrayItem $w={40}><SyncIcon /></TrayItem>
          <TrayItem $w={25}><WifiIcon /></TrayItem>
          <TrayItem $w={39}>ENG</TrayItem>
          <Clock>7:59 PM<br />2/14/2021</Clock>
          <Notifications><NoteIcon /><Badge>5</Badge></Notifications>
          <ShowDesktop />
        </Tray>
      </Taskbar>
    </Screen>
  );
}
